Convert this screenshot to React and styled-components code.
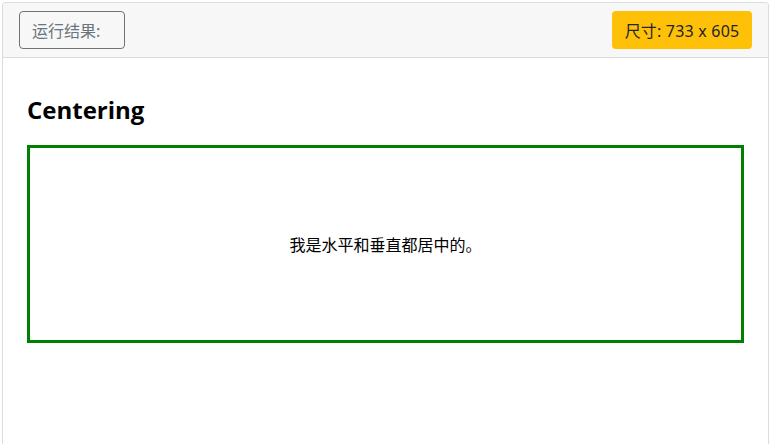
import React from 'react';
import styled, { createGlobalStyle } from 'styled-components';

const GlobalStyle = createGlobalStyle`
html, body {
  margin: 0;
  padding: 0;
  background: #fff;
}
body {
  font-family: "Noto Sans", "Open Sans", "Noto Sans CJK SC", sans-serif;
  color: #212529;
}
`;

export default function App() {
    return (
        <>
            <GlobalStyle />
            <Frame>
                <Toolbar>
                    <ResultButton>运行结果:</ResultButton>
                    <SizeBadge>尺寸: 733 x 605</SizeBadge>
                </Toolbar>
                <Content>
                    <Title>Centering</Title>
                    <CenterBox>
                        <CenterText>我是水平和垂直都居中的。</CenterText>
                    </CenterBox>
                </Content>
            </Frame>
        </>
    );
}

const Frame = styled.div`
margin: 2px 2px 0 2px;
height: 442px;
box-sizing: border-box;
border: 1px solid #dcdcdc;
border-bottom: none;
border-radius: 4px 4px 0 0;
overflow: hidden;
display: flex;
flex-direction: column;
`;

const Toolbar = styled.div`
display: flex;
justify-content: space-between;
align-items: center;
padding: 8px 16px;
background: #f7f7f7;
border-bottom: 1px solid #dcdcdc;
`;

const ResultButton = styled.div`
box-sizing: border-box;
height: 38px;
width: 106px;
display: flex;
align-items: center;
padding: 0 12px;
border: 1px solid #6c757d;
border-radius: 4px;
color: #6c757d;
font-size: 16px;
font-family: "Noto Sans CJK SC", sans-serif;
`;

const SizeBadge = styled.div`
box-sizing: border-box;
height: 38px;
width: 140px;
display: flex;
align-items: center;
justify-content: center;
background: #ffc107;
border-radius: 4px;
color: #212529;
font-size: 16px;
letter-spacing: 0.2px;
`;

const Content = styled.div`
padding: 0 24px;
`;

const Title = styled.h2`
margin: 38px 0 20px;
font-size: 24px;
line-height: 1.2;
font-weight: 700;
color: #000;
font-family: "Open Sans", "Noto Sans", sans-serif;
`;

const CenterBox = styled.div`
box-sizing: border-box;
height: 198px;
border: 3px solid #008000;
display: flex;
align-items: center;
justify-content: center;
`;

const CenterText = styled.span`
font-size: 16px;
color: #000;
font-family: "Noto Sans CJK SC", sans-serif;
`;
